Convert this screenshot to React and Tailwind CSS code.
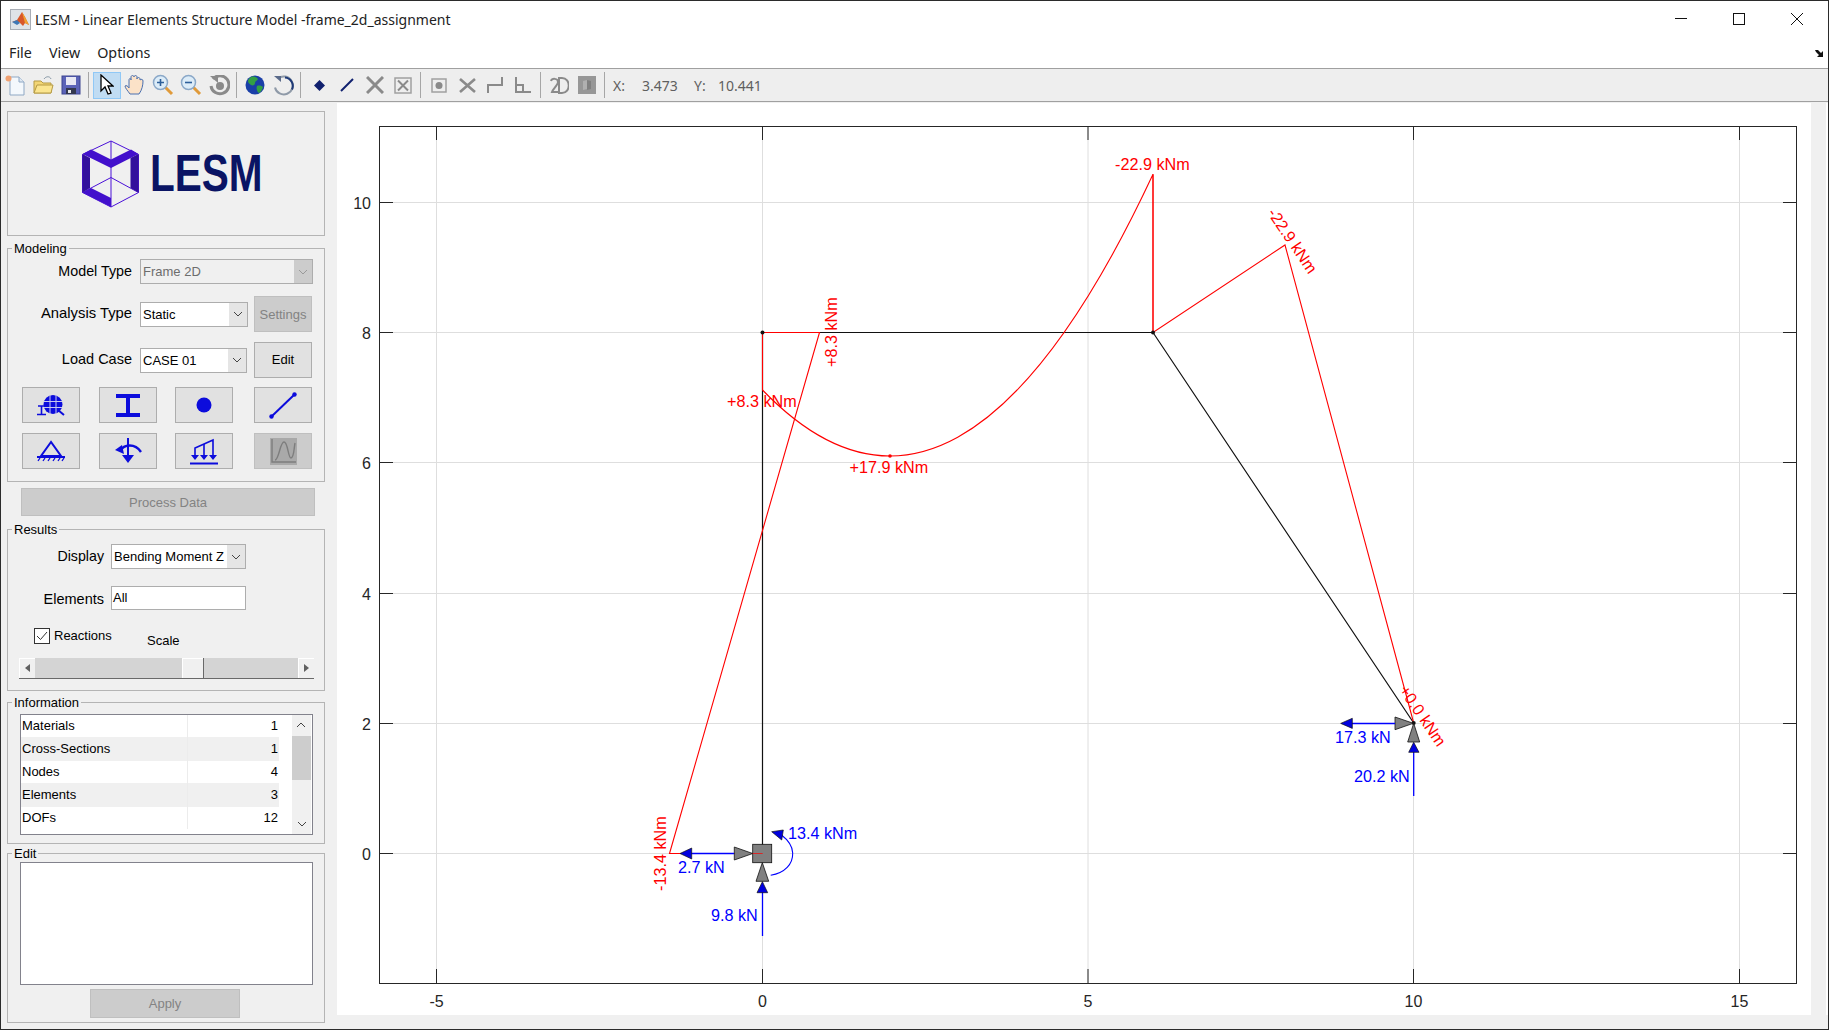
import React from 'react'

const GRID_X = [
  { v: '-5', x: 436.5 },
  { v: '0', x: 762.5 },
  { v: '5', x: 1088 },
  { v: '10', x: 1413.5 },
  { v: '15', x: 1739.5 },
]
const GRID_Y = [
  { v: '0', y: 853.5 },
  { v: '2', y: 723.5 },
  { v: '4', y: 593.5 },
  { v: '6', y: 462.5 },
  { v: '8', y: 332.5 },
  { v: '10', y: 202.5 },
]

const RED_LABELS = [
  { text: '+8.3 kNm', x: 727, y: 406.5 },
  { text: '+17.9 kNm', x: 849.5, y: 472.5 },
  { text: '-22.9 kNm', x: 1115, y: 170 },
  { text: '+8.3 kNm', x: 837, y: 367, rot: -90 },
  { text: '-13.4 kNm', x: 666, y: 891, rot: -90 },
  { text: '-22.9 kNm', x: 1267, y: 213, rot: 56 },
  { text: '+0.0 kNm', x: 1398.5, y: 690, rot: 56 },
]
const BLUE_LABELS = [
  { text: '13.4 kNm', x: 788, y: 839 },
  { text: '2.7 kN', x: 678, y: 872.5 },
  { text: '9.8 kN', x: 711, y: 920.5 },
  { text: '17.3 kN', x: 1335, y: 742.5 },
  { text: '20.2 kN', x: 1354, y: 781.5 },
]

const INFO_ROWS = [
  { name: 'Materials', value: '1', cls: 'h-[22px] bg-white' },
  { name: 'Cross-Sections', value: '1', cls: 'h-[24px] bg-[#f0f0f0]' },
  { name: 'Nodes', value: '4', cls: 'h-[22px] bg-white' },
  { name: 'Elements', value: '3', cls: 'h-[24px] bg-[#f0f0f0]' },
  { name: 'DOFs', value: '12', cls: 'h-[22px] bg-white' },
]

function Chevron({ color = '#444' }) {
  return (
    <svg width="10" height="6" viewBox="0 0 10 6">
      <path d="M1 1l4 4 4-4" fill="none" stroke={color} strokeWidth="1" />
    </svg>
  )
}

function Combo({ text, width, height = 'h-[25px]', disabled }) {
  return (
    <div className={`flex ${width} ${height} border border-[#adadad] ${disabled ? 'bg-[#f0f0f0] text-[#6d6d6d]' : 'bg-white text-black'}`}>
      <span className="flex-1 pl-[2px] leading-[24px] text-[13px] whitespace-nowrap overflow-hidden">{text}</span>
      <span className={`w-[18px] flex items-center justify-center ${disabled ? 'bg-[#cccccc]' : 'bg-[#e5e5e5]'}`}>
        <Chevron color={disabled ? '#9a9a9a' : '#444'} />
      </span>
    </div>
  )
}

function GroupBox({ title, className, children }) {
  return (
    <div className={`relative w-[318px] border border-[#b4b4b4] ${className}`}>
      <span className="absolute top-[-8px] left-[4px] bg-[#f0f0f0] px-[2px] leading-[16px] text-[13px] text-black">{title}</span>
      {children}
    </div>
  )
}

function GlyphButton({ children, disabled }) {
  return (
    <div className={`flex w-[58px] h-[36px] items-center justify-center border ${disabled ? 'bg-[#cccccc] border-[#bfbfbf]' : 'bg-[#e1e1e1] border-[#adadad]'}`}>
      {children}
    </div>
  )
}

const BLUE = '#0c0cdc'

function ModelGlyph() {
  return (
    <svg width="28" height="21" viewBox="0 0 28 21">
      <circle cx="16" cy="9.500" r="9.500" fill={BLUE} />
      <path d="M7 6.500h18M7 12.500h18M13 0v19M19 0v19" stroke="#c8c8ee" strokeWidth="1" />
      <path d="M21 15l6 5" stroke={BLUE} strokeWidth="2" />
      <path d="M1 11h7M4.500 11v8M0 19.500h9" stroke={BLUE} strokeWidth="1.600" fill="none" />
    </svg>
  )
}
function SectionGlyph() {
  return (
    <svg width="24" height="23" viewBox="0 0 24 23">
      <path d="M0 0h24v4H14v15h10v4H0v-4h10V4H0z" fill={BLUE} />
    </svg>
  )
}
function NodeGlyph() {
  return (
    <svg width="16" height="16" viewBox="0 0 16 16">
      <circle cx="8" cy="8" r="7.500" fill={BLUE} />
    </svg>
  )
}
function ElementGlyph() {
  return (
    <svg width="28" height="27" viewBox="0 0 28 27">
      <path d="M2 25L26 2" stroke={BLUE} strokeWidth="2" />
      <circle cx="2.500" cy="24.500" r="2.200" fill={BLUE} />
      <circle cx="25.500" cy="2.500" r="2.200" fill={BLUE} />
    </svg>
  )
}
function SupportGlyph() {
  return (
    <svg width="28" height="22" viewBox="0 0 28 22">
      <path d="M14 2L4 16h20z" fill="none" stroke={BLUE} strokeWidth="2" />
      <path d="M0 17h28" stroke={BLUE} strokeWidth="2" />
      <path d="M3 18l-2 3M8 18l-2 3M13 18l-2 3M18 18l-2 3M23 18l-2 3M27 18l-2 3" stroke={BLUE} strokeWidth="1.300" />
    </svg>
  )
}
function MomentGlyph() {
  return (
    <svg width="27" height="26" viewBox="0 0 27 26">
      <path d="M13 0v20" stroke={BLUE} strokeWidth="2" />
      <path d="M7 17l6 8 6-8z" fill={BLUE} />
      <path d="M5 13C9 6 20 5 26 14" fill="none" stroke={BLUE} strokeWidth="2.400" />
      <path d="M0 12l7-5 2 9z" fill={BLUE} />
    </svg>
  )
}
function LoadGlyph() {
  return (
    <svg width="28" height="27" viewBox="0 0 28 27">
      <path d="M5 20V10L23 2v18" fill="none" stroke={BLUE} strokeWidth="1.600" />
      <path d="M14 6v14" stroke={BLUE} strokeWidth="1.600" />
      <path d="M1 17l4 5 4-5zM10 17l4 5 4-5zM19 17l4 5 4-5z" fill={BLUE} />
      <path d="M0 25.500h28" stroke={BLUE} strokeWidth="2" />
    </svg>
  )
}
function ChartGlyph() {
  return (
    <svg width="27" height="27" viewBox="0 0 27 27">
      <rect width="27" height="27" fill="#a9a9a9" />
      <path d="M2 1v23h24" fill="none" stroke="#7d7d7d" strokeWidth="1.400" />
      <path d="M5 22C9 22 10 4 14 4s4 16 7 16 3-10 4-15" fill="none" stroke="#7d7d7d" strokeWidth="1.400" />
    </svg>
  )
}

function LesmCube() {
  return (
    <svg width="58" height="68" viewBox="81 140 58 68" className="shrink-0">
      <path d="M111 141L82.500 154.500v38L111 207l27.500-14.500v-38zM111 141v66M111 177.500L82.500 192.500M111 177.500L138.500 192.500" fill="none" stroke="#4a10d8" strokeWidth="1" />
      <path d="M82.500 154L91 149.500 111 159.500 131 149.500 138.500 154 111 168z" fill="#4210cc" />
      <path d="M82.500 154L90 158V188L82.500 192.500z" fill="#32109c" />
      <path d="M138.500 154L130.500 158V188L138.500 192.500z" fill="#32109c" />
      <path d="M82.500 192.500L91 188 111 198V207z" fill="#4210cc" />
    </svg>
  )
}

function ToolIcon({ children, active }) {
  return (
    <div className={`flex w-[28px] h-[27px] shrink-0 items-center justify-center ${active ? 'bg-[#c0dcf3] border border-[#90c8f6]' : ''}`}>
      {children}
    </div>
  )
}
function ToolSep() {
  return <div className="w-px h-[26px] ml-[3px] mr-[4px] bg-[#a6a6a6] shrink-0" />
}

const GRAY = '#8a8a8a'

function Toolbar() {
  return (
    <div className="flex h-[32px] shrink-0 items-center border-y border-[#a0a0a0] bg-[#eeeeee] box-content">
      <ToolIcon>
        <svg width="22" height="22" viewBox="0 0 22 22">
          <path d="M6 3h9l5 5v13H6z" fill="#f4f8fc" stroke="#8fa8c4" />
          <path d="M15 3v5h5" fill="#dfe8f2" stroke="#8fa8c4" />
          <circle cx="4.500" cy="4.500" r="3" fill="#f0a070" />
        </svg>
      </ToolIcon>
      <ToolIcon>
        <svg width="21" height="20" viewBox="0 0 21 20">
          <path d="M1 6h7l2 2h8v10H1z" fill="#f3d675" stroke="#b59a45" />
          <path d="M1 18l3-8h16l-2 8z" fill="#fbe58f" stroke="#b59a45" />
          <path d="M11 4c2-3 6-3 7 0" fill="none" stroke="#8a9aa8" />
        </svg>
      </ToolIcon>
      <ToolIcon>
        <svg width="20" height="20" viewBox="0 0 20 20">
          <rect x="1" y="1" width="18" height="18" fill="#5b63b8" stroke="#3d4590" />
          <rect x="5" y="2" width="10" height="8" fill="#e8e8f4" />
          <rect x="5" y="13" width="10" height="6" fill="#33384f" />
          <rect x="7" y="15" width="3" height="3" fill="#e8e8e8" />
        </svg>
      </ToolIcon>
      <ToolSep />
      <ToolIcon active>
        <svg width="14" height="22" viewBox="0 0 14 22">
          <path d="M1 1v16l4-4 3 7 3-1-3-7h5z" fill="#fff" stroke="#000" strokeWidth="1.300" />
        </svg>
      </ToolIcon>
      <ToolIcon>
        <svg width="22" height="22" viewBox="0 0 22 22">
          <path d="M6 20c-2-3-5-6-5-8 1-1 3 0 4 2V6c0-2 2-2 2 0V3c0-2 3-2 3 0v0c0-2 3-2 3 0v2c0-2 3-2 3 0v1c1-1 3-1 3 1 0 4-1 9-4 13z" fill="#fbe2c8" stroke="#4a70b0" />
        </svg>
      </ToolIcon>
      <ToolIcon>
        <svg width="22" height="22" viewBox="0 0 22 22">
          <path d="M13 13l7 7" stroke="#e09a3a" strokeWidth="3" />
          <circle cx="8.500" cy="8.500" r="7" fill="#dcecf8" stroke="#8aa8c8" strokeWidth="1.500" />
          <path d="M5 8.500h7M8.500 5v7" stroke="#2c5f9a" strokeWidth="1.600" />
        </svg>
      </ToolIcon>
      <ToolIcon>
        <svg width="22" height="22" viewBox="0 0 22 22">
          <path d="M13 13l7 7" stroke="#e09a3a" strokeWidth="3" />
          <circle cx="8.500" cy="8.500" r="7" fill="#dcecf8" stroke="#8aa8c8" strokeWidth="1.500" />
          <path d="M5 8.500h7" stroke="#2c5f9a" strokeWidth="1.600" />
        </svg>
      </ToolIcon>
      <ToolIcon>
        <svg width="21" height="21" viewBox="0 0 21 21">
          <path d="M4 4a9 9 0 1 1-2 7" fill="none" stroke={GRAY} strokeWidth="3" />
          <path d="M1 1h8v7z" fill={GRAY} />
          <circle cx="11" cy="11" r="4" fill={GRAY} />
        </svg>
      </ToolIcon>
      <ToolSep />
      <ToolIcon>
        <svg width="20" height="20" viewBox="0 0 20 20">
          <circle cx="10" cy="10" r="9.500" fill="#1a3fa8" />
          <path d="M6 2c3-1 6 0 7 2-1 2-3 2-3 4s-2 3-4 2-3-3-3-4 1-3 3-4zM12 11c2-1 5 0 6 1-1 3-2 5-4 6-2-1-3-5-2-7z" fill="#33a045" />
        </svg>
      </ToolIcon>
      <ToolIcon>
        <svg width="21" height="21" viewBox="0 0 21 21">
          <path d="M5 3.500a9 9 0 1 1-3 9" fill="none" stroke="#8f9aa8" strokeWidth="2" />
          <path d="M12 2.500a8.500 8.500 0 0 1 7 12" fill="none" stroke="#1f3a78" strokeWidth="2" />
          <path d="M1 1h7v6z" fill="#5a6a8a" />
        </svg>
      </ToolIcon>
      <ToolSep />
      <ToolIcon>
        <svg width="11" height="11" viewBox="0 0 11 11">
          <path d="M5.500 0L11 5.500 5.500 11 0 5.500z" fill="#10206e" />
        </svg>
      </ToolIcon>
      <ToolIcon>
        <svg width="14" height="14" viewBox="0 0 14 14">
          <path d="M1 13L13 1" stroke="#10206e" strokeWidth="2" />
        </svg>
      </ToolIcon>
      <ToolIcon>
        <svg width="18" height="18" viewBox="0 0 18 18">
          <path d="M1 1l16 16M17 1L1 17" stroke={GRAY} strokeWidth="3" />
        </svg>
      </ToolIcon>
      <ToolIcon>
        <svg width="18" height="17" viewBox="0 0 18 17">
          <rect x="1" y="1" width="16" height="15" fill="none" stroke="#a0a0a0" strokeWidth="1.500" />
          <path d="M4 3.500l10 10M14 3.500l-10 10" stroke={GRAY} strokeWidth="2" />
        </svg>
      </ToolIcon>
      <ToolSep />
      <ToolIcon>
        <svg width="16" height="15" viewBox="0 0 16 15">
          <rect x="1" y="1" width="14" height="13" fill="none" stroke="#a0a0a0" strokeWidth="1.500" />
          <circle cx="8" cy="7.500" r="3.500" fill={GRAY} />
        </svg>
      </ToolIcon>
      <ToolIcon>
        <svg width="17" height="15" viewBox="0 0 17 15">
          <path d="M1 1l15 13M16 1L1 14" stroke={GRAY} strokeWidth="2.600" />
        </svg>
      </ToolIcon>
      <ToolIcon>
        <svg width="16" height="16" viewBox="0 0 16 16">
          <path d="M1 16V8h14V0" fill="none" stroke={GRAY} strokeWidth="2" />
        </svg>
      </ToolIcon>
      <ToolIcon>
        <svg width="16" height="16" viewBox="0 0 16 16">
          <path d="M1 0v15h15M1 8h7v7" fill="none" stroke={GRAY} strokeWidth="2" />
        </svg>
      </ToolIcon>
      <ToolSep />
      <ToolIcon>
        <svg width="19" height="17" viewBox="0 0 19 17">
          <path d="M1 4c1-3 7-3 7 1 0 3-5 7-6 10h7M9 1h3c9 0 9 15 0 15H9z" fill="none" stroke={GRAY} strokeWidth="2" />
        </svg>
      </ToolIcon>
      <ToolIcon>
        <svg width="18" height="18" viewBox="0 0 18 18">
          <rect width="18" height="18" fill="#979797" />
          <path d="M5 5l4-1v9l-4 1z" fill="#b0b0b0" />
          <path d="M9 4l4 1v8l-4 1z" fill="#808080" />
        </svg>
      </ToolIcon>
      <ToolSep />
      <div className="flex ml-[4px] text-[14px] text-[#5f5f5f] font-['Noto_Sans',sans-serif]">
        <span className="w-[29px]">X:</span>
        <span className="w-[52px]">3.473</span>
        <span className="w-[24px]">Y:</span>
        <span>10.441</span>
      </div>
    </div>
  )
}

function LeftPanel() {
  return (
    <div className="w-[336px] h-full shrink-0 pl-[6px] pt-[9px] bg-[#f0f0f0] text-[13px] text-black">
      <div className="flex w-[318px] h-[125px] pl-[73px] items-center border border-[#b4b4b4]">
        <LesmCube />
        <span className="ml-[11px] w-[110px] origin-left scale-x-[0.795] text-[51px] leading-none font-bold text-[#0a1464]">LESM</span>
      </div>

      <GroupBox title="Modeling" className="h-[234px] mt-[12px] pt-[10px]">
        <div className="flex items-center">
          <span className="w-[124px] mr-[8px] text-right text-[14.300px]">Model Type</span>
          <Combo text="Frame 2D" width="w-[173px]" disabled />
        </div>
        <div className="flex items-center h-[36px] mt-[12px]">
          <span className="w-[124px] mr-[8px] mb-[2px] text-right text-[14.800px]">Analysis Type</span>
          <Combo text="Static" width="w-[108px]" />
          <div className="flex w-[58px] h-[36px] ml-[6px] pt-[1px] items-center justify-center bg-[#cccccc] border border-[#bfbfbf] text-[#838383]">Settings</div>
        </div>
        <div className="flex items-center h-[36px] mt-[10px]">
          <span className="w-[124px] mr-[8px] text-right text-[14.500px]">Load Case</span>
          <Combo text="CASE 01" width="w-[107px]" />
          <div className="flex w-[58px] h-[36px] ml-[7px] items-center justify-center bg-[#e1e1e1] border border-[#adadad]">Edit</div>
        </div>
        <div className="grid grid-cols-[77px_76px_79px_58px] ml-[14px] mt-[9px]">
          <GlyphButton><ModelGlyph /></GlyphButton>
          <GlyphButton><SectionGlyph /></GlyphButton>
          <GlyphButton><NodeGlyph /></GlyphButton>
          <GlyphButton><ElementGlyph /></GlyphButton>
        </div>
        <div className="grid grid-cols-[77px_76px_79px_58px] ml-[14px] mt-[10px]">
          <GlyphButton><SupportGlyph /></GlyphButton>
          <GlyphButton><MomentGlyph /></GlyphButton>
          <GlyphButton><LoadGlyph /></GlyphButton>
          <GlyphButton disabled><ChartGlyph /></GlyphButton>
        </div>
      </GroupBox>

      <div className="flex w-[294px] h-[28px] ml-[14px] mt-[6px] pt-[1px] items-center justify-center bg-[#cccccc] border border-[#bfbfbf] text-[#838383]">Process Data</div>

      <GroupBox title="Results" className="h-[162px] mt-[13px] pt-[14px]">
        <div className="flex items-center">
          <span className="w-[96px] mr-[7px] text-right text-[14.200px]">Display</span>
          <Combo text="Bending Moment Z" width="w-[135px]" />
        </div>
        <div className="flex items-center mt-[17px]">
          <span className="w-[96px] mr-[7px] pt-[3px] text-right text-[14.500px]">Elements</span>
          <div className="w-[135px] h-[24px] pl-[1px] border border-[#adadad] bg-white leading-[22px]">All</div>
        </div>
        <div className="flex items-start h-[16px] mt-[17px] ml-[26px]">
          <div className="flex w-[16px] h-[16px] items-center justify-center border border-[#333333] bg-white">
            <svg width="12" height="10" viewBox="0 0 12 10">
              <path d="M1 5l3.500 3.500L11 1" fill="none" stroke="#333" />
            </svg>
          </div>
          <span className="w-[97px] pl-[4px] leading-[16px]">Reactions</span>
          <span className="leading-[25px]">Scale</span>
        </div>
        <div className="flex w-[295px] h-[21px] ml-[11px] mt-[14px] border-b border-[#696969]">
          <div className="flex w-[16px] items-center justify-center bg-[#f0f0f0] border-l border-t border-white">
            <svg width="5" height="8" viewBox="0 0 5 8"><path d="M5 0v8L0 4z" fill="#606060" /></svg>
          </div>
          <div className="w-[147px] bg-[#d4d4d4]" />
          <div className="w-[21px] bg-[#f0f0f0] border-l border-t border-white" />
          <div className="flex-1 bg-[#d4d4d4] border-l border-[#696969]" />
          <div className="flex w-[16px] items-center justify-center bg-[#f0f0f0] border-l border-t border-white">
            <svg width="5" height="8" viewBox="0 0 5 8"><path d="M0 0v8l5-4z" fill="#606060" /></svg>
          </div>
        </div>
      </GroupBox>

      <GroupBox title="Information" className="h-[142px] mt-[11px] pt-[11px]">
        <div className="flex w-[293px] h-[121px] ml-[12px] border border-[#82828c] bg-white">
          <div className="w-[258px]">
            {INFO_ROWS.map((row) => (
              <div key={row.name} className={`flex ${row.cls} items-center`}>
                <span className="w-[167px] h-full flex items-center pl-[1px] border-r border-[#ececec]">{row.name}</span>
                <span className="flex-1 pr-[1px] text-right">{row.value}</span>
              </div>
            ))}
          </div>
          <div className="w-[13px]" />
          <div className="flex flex-col w-[19px] bg-[#f0f0f0]">
            <div className="flex h-[21px] items-center justify-center rotate-180"><Chevron color="#444" /></div>
            <div className="h-[44px] bg-[#cdcdcd]" />
            <div className="flex-1" />
            <div className="flex h-[21px] items-center justify-center"><Chevron color="#444" /></div>
          </div>
        </div>
      </GroupBox>

      <GroupBox title="Edit" className="h-[170px] mt-[9px] pt-[8px]">
        <div className="w-[293px] h-[123px] ml-[12px] border border-[#82828c] bg-white" />
        <div className="flex w-[150px] h-[29px] ml-[82px] mt-[4px] items-center justify-center bg-[#cccccc] border border-[#bfbfbf] text-[#838383]">Apply</div>
      </GroupBox>
    </div>
  )
}

function Arrow({ d, line }) {
  return (
    <g>
      <path d={line} stroke="#0000ff" strokeWidth="1.300" fill="none" />
      <path d={d} fill="#0000e0" stroke="#111" strokeWidth="0.700" />
    </g>
  )
}

function Plot() {
  return (
    <svg width="1474" height="912" viewBox="337 103 1474 912" className="block font-['Liberation_Sans',Arial,sans-serif]">
      {GRID_X.map((t) => (
        <path key={t.v} d={`M${t.x} 126V983`} stroke="#dedede" strokeWidth="1" />
      ))}
      {GRID_Y.map((t) => (
        <path key={t.v} d={`M379 ${t.y}H1797`} stroke="#dedede" strokeWidth="1" />
      ))}
      {GRID_X.map((t) => (
        <g key={t.v}>
          <path d={`M${t.x} 126v14M${t.x} 983v-14`} stroke="#262626" />
          <text x={t.x} y="1007" textAnchor="middle" className="text-[16px] fill-[#262626]">{t.v}</text>
        </g>
      ))}
      {GRID_Y.map((t) => (
        <g key={t.v}>
          <path d={`M379 ${t.y}h14M1797 ${t.y}h-14`} stroke="#262626" />
          <text x="371" y={t.y + 6} textAnchor="end" className="text-[16px] fill-[#262626]">{t.v}</text>
        </g>
      ))}
      <rect x="379.500" y="126.500" width="1417" height="857" fill="none" stroke="#262626" />

      <path d="M762.500 853.500V332.500H1153L1413.700 723" fill="none" stroke="#111" strokeWidth="1.200" />

      <g fill="none" stroke="#ff0000" strokeWidth="1.100">
        <path d="M762.500 853.500H669.500L819.500 332.500H762.500" />
        <path d="M762.500 332.500V390Q957.700 592.300 1153 174.300V332.500L1285 245L1413.700 723" />
      </g>
      <path d="M1153 174.300V332.500" stroke="#ff0000" strokeOpacity="0.500" strokeWidth="2" />
      <circle cx="890" cy="456" r="1.800" fill="#ff0000" />
      <circle cx="762.500" cy="332.500" r="2" fill="#111" />
      <circle cx="1153" cy="332.500" r="2" fill="#111" />
      <circle cx="1413.700" cy="723" r="2" fill="#111" />

      <g fill="#808080" stroke="#111" strokeWidth="0.800">
        <rect x="752.700" y="844.300" width="19" height="18.400" />
        <path d="M734.300 847v13l18.400-6.500z" />
        <path d="M762.300 862.700L756 881.300h12.700z" />
        <path d="M1395 717v12.700l18.300-6.400z" />
        <path d="M1413.700 723.300L1407.700 742h12z" />
      </g>
      <path d="M752.700 853.500h10" stroke="#ff0000" strokeWidth="0.700" />

      <Arrow line="M690 853.500H734" d="M680 853.500l11.700-5.500v11z" />
      <Arrow line="M762.500 892V936" d="M762.400 881.700l-5.400 11h10.700z" />
      <Arrow line="M1352 723.500H1395" d="M1340.700 723.400l11.600-5.100v10.100z" />
      <Arrow line="M1413.700 752V796" d="M1413.700 742.300l-5 10h10.300z" />
      <path d="M770.700 875.300C785 873 793 864 792.700 853C792.500 846 788 840 781.500 835" fill="none" stroke="#0000ff" strokeWidth="1.100" />
      <path d="M771.700 831.700L783.300 830L781.700 840z" fill="#0000e0" stroke="#111" strokeWidth="0.700" />

      {RED_LABELS.map((l) => (
        <text key={l.text + l.x} x={l.x} y={l.y} transform={l.rot ? `rotate(${l.rot} ${l.x} ${l.y})` : undefined} className="text-[16.200px] fill-[#ff0000]">{l.text}</text>
      ))}
      {BLUE_LABELS.map((l) => (
        <text key={l.text} x={l.x} y={l.y} className="text-[16.200px] fill-[#0000ff]">{l.text}</text>
      ))}
    </svg>
  )
}

export default function App() {
  return (
    <div className="flex flex-col w-[1829px] h-[1030px] overflow-hidden border border-[#2b2b2b] bg-white font-['Liberation_Sans',Arial,sans-serif]">
      <div className="flex h-[36px] shrink-0 items-center pl-[9px] pr-[2px] font-['Noto_Sans',sans-serif] text-[14px] text-[#222]">
        <svg width="21" height="21" viewBox="0 0 21 21" className="shrink-0">
          <rect x="0.500" y="0.500" width="20" height="20" fill="#dfe3e8" stroke="#a8adb5" />
          <path d="M2 13l5-2 5-8 3 5 4 8-4-2-2 3-4-4z" fill="#d8572a" />
          <path d="M2 13l5-2 3 3-3 2z" fill="#3f78b5" />
          <path d="M12 3l3 5 4 8-4-2z" fill="#f0a030" />
        </svg>
        <span className="ml-[4px]">LESM - Linear Elements Structure Model -frame_2d_assignment</span>
        <div className="flex ml-auto">
          <div className="flex w-[58px] h-[30px] items-center justify-center">
            <svg width="12" height="12" viewBox="0 0 12 12"><path d="M0 5.500h12" stroke="#111" /></svg>
          </div>
          <div className="flex w-[58px] h-[30px] items-center justify-center">
            <svg width="12" height="12" viewBox="0 0 12 12"><rect x="0.500" y="0.500" width="11" height="11" fill="none" stroke="#111" /></svg>
          </div>
          <div className="flex w-[58px] h-[30px] items-center justify-center">
            <svg width="12" height="12" viewBox="0 0 12 12"><path d="M0 0l12 12M12 0L0 12" stroke="#111" /></svg>
          </div>
        </div>
      </div>

      <div className="flex h-[31px] shrink-0 items-center pl-[8px] pr-[3px] gap-[17px] font-['Noto_Sans',sans-serif] text-[14.300px] text-[#222]">
        <span>File</span>
        <span>View</span>
        <span>Options</span>
        <svg width="10" height="8" viewBox="0 0 10 8" className="ml-auto">
          <path d="M0 1h3l3 3 2-2v6H2l2-2-3-3z" fill="#111" />
        </svg>
      </div>

      <Toolbar />

      <div className="flex flex-1 min-h-0 bg-[#f0f0f0]">
        <LeftPanel />
        <div className="w-[1474px] h-[912px] mt-[1px] bg-white shrink-0">
          <Plot />
        </div>
        <div className="flex-1 h-[912px] mt-[1px] border-r-[2px] border-white" />
      </div>
    </div>
  )
}
